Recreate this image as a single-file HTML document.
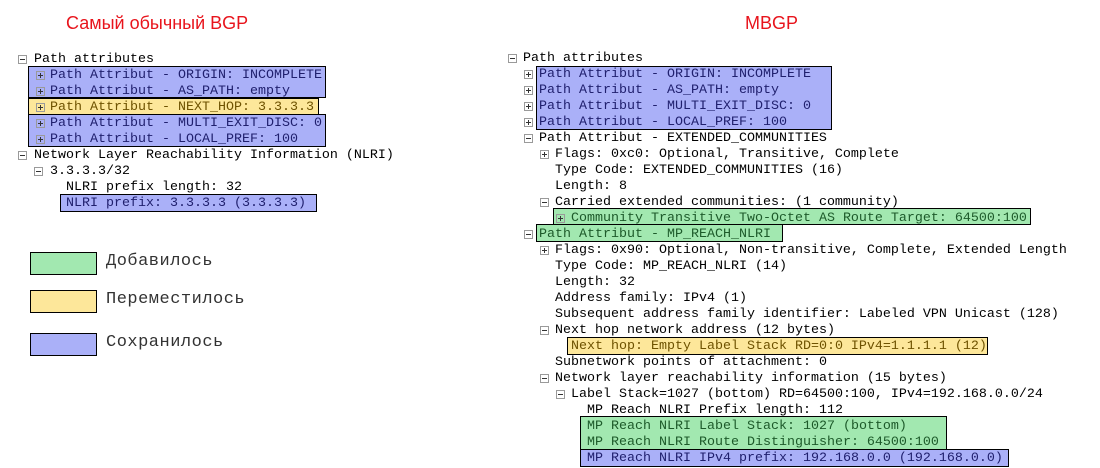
<!DOCTYPE html>
<html><head><meta charset="utf-8"><style>
body{margin:0;width:1100px;height:468px;background:#fff;position:relative;overflow:hidden;font-family:"Liberation Mono",monospace;font-size:13.33px;color:#000}
.l{position:absolute;height:16px;line-height:16px;white-space:pre;transform:translateY(2px)}
.b{position:absolute;border:1px solid #000;box-sizing:border-box}
.bl{background:#aab0f8}.gr{background:#a2e8b0}.ye{background:#fde79a}
.i{position:absolute;width:9px;height:9px;box-sizing:border-box;border:1px solid #9a9a9a;background:#fff;transform:translateY(1px)}
.i:before{content:"";position:absolute;left:1px;top:3px;width:5px;height:1px;background:#333}
.p:after{content:"";position:absolute;left:3px;top:1px;width:1px;height:5px;background:#333}
.ib{background:transparent}
.tb{color:#20206e}.tg{color:#1d5a2a}.ty{color:#6e5200}
.h{position:absolute;font-family:"Liberation Sans",sans-serif;font-size:18px;color:#e8141c}
.lg{position:absolute;font-size:17px;color:#333;letter-spacing:0.5px}
</style></head><body>
<div class="h" style="left:66px;top:13px">Самый обычный BGP</div>
<div class="h" style="left:745px;top:13px">MBGP</div>

<div class="b bl" style="left:28px;top:66px;width:298px;height:32px"></div>
<div class="b ye" style="left:28px;top:98px;width:291px;height:17px"></div>
<div class="b bl" style="left:28px;top:114px;width:298px;height:33px"></div>
<div class="b bl" style="left:60px;top:194px;width:257px;height:18px"></div>

<div class="i" style="left:18px;top:54px"></div><div class="l" style="left:34px;top:50px">Path attributes</div>
<div class="i p ib" style="left:36px;top:70px"></div><div class="l tb" style="left:50px;top:66px">Path Attribut - ORIGIN: INCOMPLETE</div>
<div class="i p ib" style="left:36px;top:86px"></div><div class="l tb" style="left:50px;top:82px">Path Attribut - AS_PATH: empty</div>
<div class="i p ib" style="left:36px;top:102px"></div><div class="l ty" style="left:50px;top:98px">Path Attribut - NEXT_HOP: 3.3.3.3</div>
<div class="i p ib" style="left:36px;top:118px"></div><div class="l tb" style="left:50px;top:114px">Path Attribut - MULTI_EXIT_DISC: 0</div>
<div class="i p ib" style="left:36px;top:134px"></div><div class="l tb" style="left:50px;top:130px">Path Attribut - LOCAL_PREF: 100</div>
<div class="i" style="left:18px;top:150px"></div><div class="l" style="left:34px;top:146px">Network Layer Reachability Information (NLRI)</div>
<div class="i" style="left:34px;top:166px"></div><div class="l" style="left:50px;top:162px">3.3.3.3/32</div>
<div class="l" style="left:66px;top:178px">NLRI prefix length: 32</div>
<div class="l tb" style="left:66px;top:194px">NLRI prefix: 3.3.3.3 (3.3.3.3)</div>

<div class="b gr" style="left:30px;top:252px;width:67px;height:23px"></div>
<div class="lg" style="left:106px;top:252px">Добавилось</div>
<div class="b ye" style="left:30px;top:290px;width:67px;height:23px"></div>
<div class="lg" style="left:106px;top:290px">Переместилось</div>
<div class="b bl" style="left:30px;top:333px;width:67px;height:23px"></div>
<div class="lg" style="left:106px;top:333px">Сохранилось</div>

<div class="b bl" style="left:536px;top:66px;width:296px;height:64px"></div>
<div class="b gr" style="left:553px;top:208px;width:478px;height:17px"></div>
<div class="b gr" style="left:536px;top:224px;width:247px;height:18px"></div>
<div class="b ye" style="left:567px;top:337px;width:421px;height:18px"></div>
<div class="b gr" style="left:580px;top:416px;width:367px;height:34px"></div>
<div class="b bl" style="left:580px;top:449px;width:429px;height:18px"></div>

<div class="i" style="left:508px;top:53px"></div><div class="l" style="left:523px;top:49px">Path attributes</div>
<div class="i p" style="left:524px;top:69px"></div><div class="l tb" style="left:539px;top:65px">Path Attribut - ORIGIN: INCOMPLETE</div>
<div class="i p" style="left:524px;top:85px"></div><div class="l tb" style="left:539px;top:81px">Path Attribut - AS_PATH: empty</div>
<div class="i p" style="left:524px;top:101px"></div><div class="l tb" style="left:539px;top:97px">Path Attribut - MULTI_EXIT_DISC: 0</div>
<div class="i p" style="left:524px;top:117px"></div><div class="l tb" style="left:539px;top:113px">Path Attribut - LOCAL_PREF: 100</div>
<div class="i" style="left:524px;top:133px"></div><div class="l" style="left:539px;top:129px">Path Attribut - EXTENDED_COMMUNITIES</div>
<div class="i p" style="left:540px;top:149px"></div><div class="l" style="left:555px;top:145px">Flags: 0xc0: Optional, Transitive, Complete</div>
<div class="l" style="left:555px;top:161px">Type Code: EXTENDED_COMMUNITIES (16)</div>
<div class="l" style="left:555px;top:177px">Length: 8</div>
<div class="i" style="left:540px;top:197px"></div><div class="l" style="left:555px;top:193px">Carried extended communities: (1 community)</div>
<div class="i p ib" style="left:556px;top:213px"></div><div class="l tg" style="left:571px;top:209px">Community Transitive Two-Octet AS Route Target: 64500:100</div>
<div class="i" style="left:524px;top:229px"></div><div class="l tg" style="left:539px;top:225px">Path Attribut - MP_REACH_NLRI</div>
<div class="i p" style="left:540px;top:245px"></div><div class="l" style="left:555px;top:241px">Flags: 0x90: Optional, Non-transitive, Complete, Extended Length</div>
<div class="l" style="left:555px;top:257px">Type Code: MP_REACH_NLRI (14)</div>
<div class="l" style="left:555px;top:273px">Length: 32</div>
<div class="l" style="left:555px;top:289px">Address family: IPv4 (1)</div>
<div class="l" style="left:555px;top:305px">Subsequent address family identifier: Labeled VPN Unicast (128)</div>
<div class="i" style="left:540px;top:325px"></div><div class="l" style="left:555px;top:321px">Next hop network address (12 bytes)</div>
<div class="l ty" style="left:571px;top:337px">Next hop: Empty Label Stack RD=0:0 IPv4=1.1.1.1 (12)</div>
<div class="l" style="left:555px;top:353px">Subnetwork points of attachment: 0</div>
<div class="i" style="left:540px;top:373px"></div><div class="l" style="left:555px;top:369px">Network layer reachability information (15 bytes)</div>
<div class="i" style="left:556px;top:389px"></div><div class="l" style="left:571px;top:385px">Label Stack=1027 (bottom) RD=64500:100, IPv4=192.168.0.0/24</div>
<div class="l" style="left:587px;top:401px">MP Reach NLRI Prefix length: 112</div>
<div class="l tg" style="left:587px;top:417px">MP Reach NLRI Label Stack: 1027 (bottom)</div>
<div class="l tg" style="left:587px;top:433px">MP Reach NLRI Route Distinguisher: 64500:100</div>
<div class="l tb" style="left:587px;top:449px">MP Reach NLRI IPv4 prefix: 192.168.0.0 (192.168.0.0)</div>
</body></html>
